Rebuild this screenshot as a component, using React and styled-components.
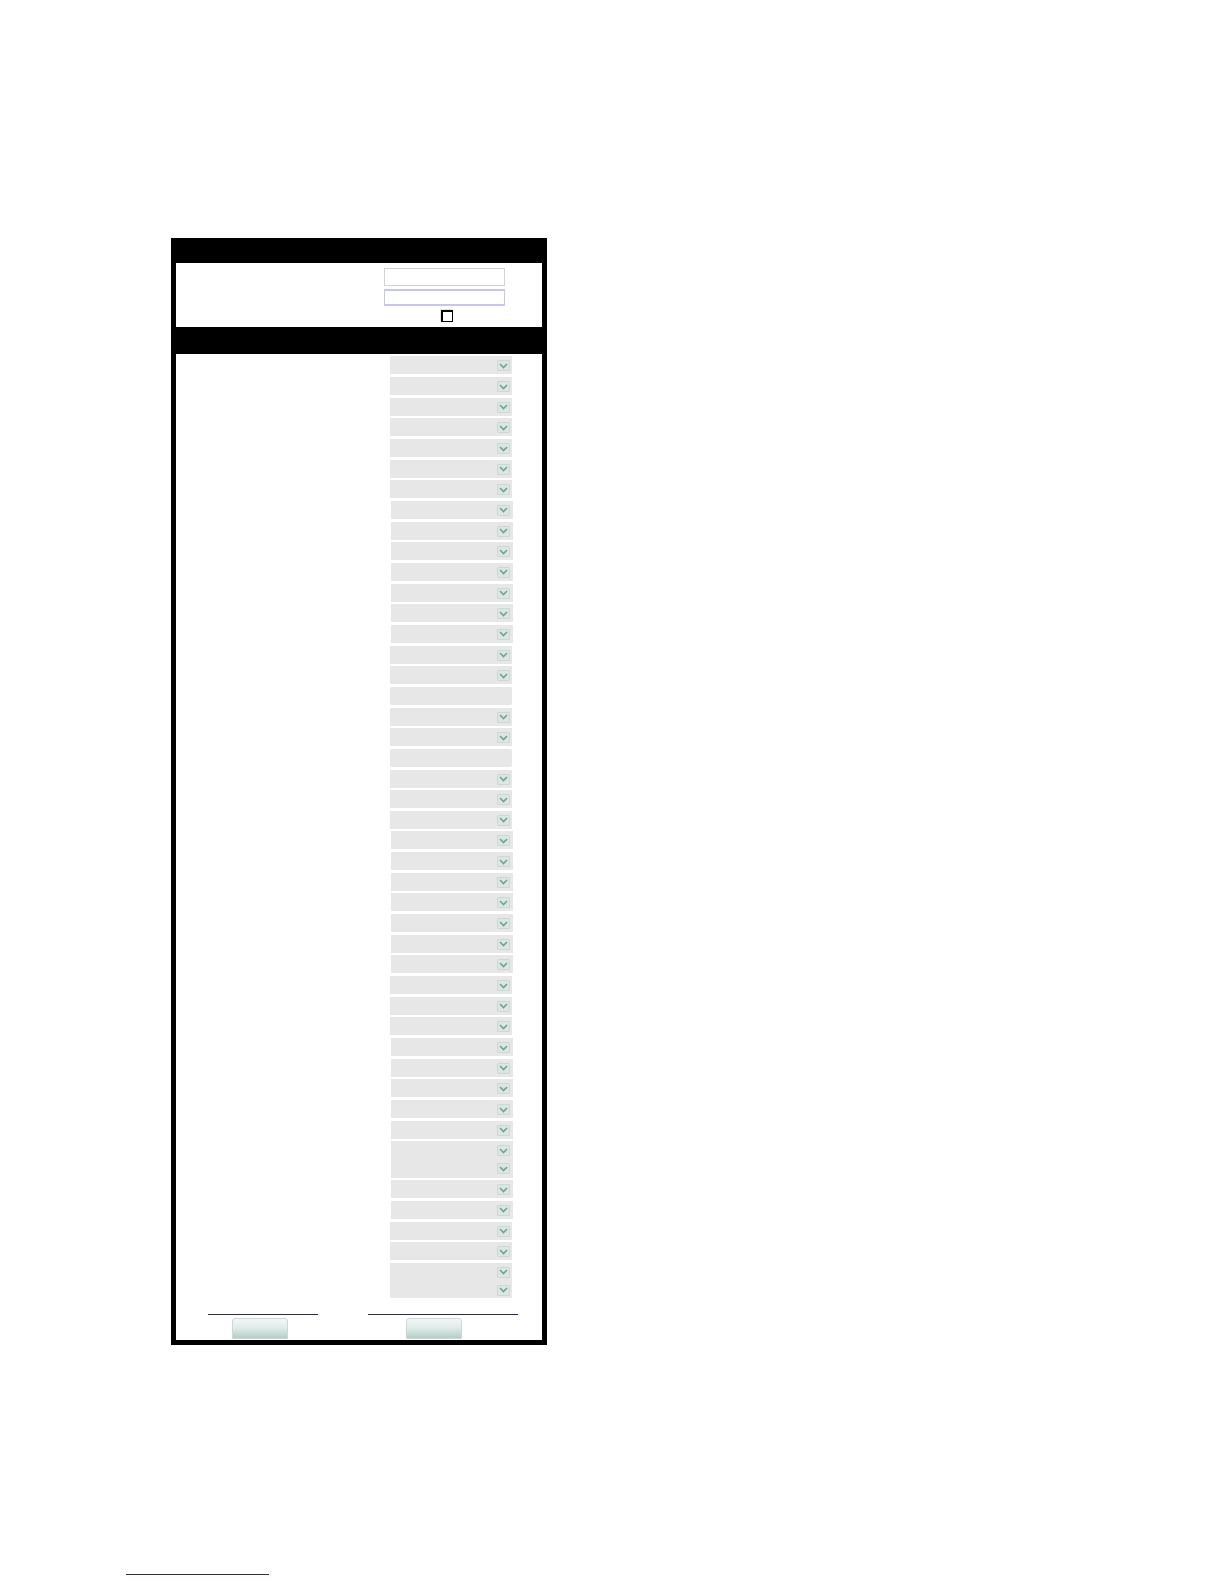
import React from 'react';
import styled, { createGlobalStyle } from 'styled-components';

const GlobalStyle = createGlobalStyle`
  html, body {
    margin: 0;
    padding: 0;
    background: #ffffff;
    font-family: "Liberation Sans", Arial, sans-serif;
  }
`;

const Page = styled.div`
  padding: 238px 0 0 171px;
  min-height: 1584px;
  box-sizing: border-box;
`;

const Frame = styled.div`
  width: 376px;
  box-sizing: border-box;
  border: 5px solid #000;
  background: #fff;
`;

const Band = styled.div`
  background: #000;
  height: ${props => props.h}px;
`;

const Section = styled.div`
  display: grid;
  grid-template-columns: 168px 198px;
`;

const LoginCell = styled.div`
  display: flex;
  flex-direction: column;
  align-items: center;
  padding: 5px 0 5px;
  gap: 3px;
`;

const TextInput = styled.div`
  width: 121px;
  height: 17.5px;
  box-sizing: border-box;
  border: 1px solid ${props => (props.focused ? '#c6c6ea' : '#d2d2d8')};
  border-top-width: ${props => (props.focused ? 2 : 1)}px;
  border-bottom-width: ${props => (props.focused ? 2 : 1)}px;
  background: #fff;
  margin-left: 3px;
`;

const Check = styled.span`
  display: block;
  width: 12px;
  height: 12px;
  box-sizing: border-box;
  border: 2px solid #000;
  border-right-width: 1.5px;
  border-bottom-width: 1.5px;
  background: #fff;
  margin: 1px 0 0 8px;
  box-shadow: -1px -1px 0 #e6e6e6;
`;

const SelectList = styled.div`
  display: flex;
  flex-direction: column;
  gap: 2.66px;
  padding: 2.4px 0 0 214px;
`;

const SelectBox = styled.div`
  width: 122px;
  height: ${props => props.h}px;
  box-sizing: border-box;
  background: #e7e7e7;
  border-radius: ${props => (props.blank ? 2 : 0)}px;
  display: flex;
  flex-direction: column;
  align-items: flex-end;
  gap: 7px;
  padding: 4px 2.5px 0 0;
  margin-left: ${props => props.shift}px;
`;

const ArrowBox = styled.span`
  display: flex;
  align-items: center;
  justify-content: center;
  width: 13px;
  height: 11px;
  box-sizing: border-box;
  background: #dde6e3;
  border: 1px solid #ccd8d4;
  border-radius: 1px;
`;

const Footer = styled.div`
  display: grid;
  grid-template-columns: 168px 198px;
  padding: 16px 0 1px;
`;

const FooterCell = styled.div`
  display: flex;
  flex-direction: column;
  align-items: center;
  gap: 2.5px;
  padding-left: ${props => props.pl}px;
`;

const Rule = styled.a`
  display: block;
  width: ${props => props.w}px;
  height: 1.5px;
  background: #2e2a5c;
`;

const Button = styled.span`
  display: block;
  width: 56px;
  height: 21px;
  box-sizing: border-box;
  border: 1px solid #c9d9d5;
  border-radius: 3px 3px 0 0;
  background: linear-gradient(#f2f6f5 0%, #e2ecea 45%, #b3cfc8 100%);
  margin-right: ${props => props.mr}px;
`;

const BottomLink = styled.a`
  display: block;
  width: 143px;
  height: 1.5px;
  background: #2e2a5c;
  margin: 229px 0 0 -45px;
`;

const Chevron = () => (
  <ArrowBox>
    <svg width="9" height="6" viewBox="0 0 9 6">
      <path d="M1 1 L4.5 4.6 L8 1" fill="none" stroke="#6aa596" strokeWidth="1.6" />
    </svg>
  </ArrowBox>
);

const rows = Array.from({ length: 44 }, (_, i) => {
  if (i === 16 || i === 19) return { kind: 'blank', h: 18 };
  if (i === 38) return { kind: 'tall', h: 36.3 };
  if (i === 43) return { kind: 'tall', h: 35 };
  return { kind: 'arrow', h: 18 };
});

const shiftFor = i => ((i >= 7 && i <= 13) || (i >= 23 && i <= 29) || (i >= 33 && i <= 40) ? 0.5 : 0);

export default function App() {
  return (
    <>
      <GlobalStyle />
      <Page>
        <Frame>
          <Band h={20} />
          <Section>
            <div />
            <LoginCell>
              <TextInput />
              <TextInput focused />
              <Check />
            </LoginCell>
          </Section>
          <Band h={27} />
          <SelectList>
            {rows.map((r, i) => (
              <SelectBox key={i} h={r.h} blank={r.kind === 'blank'} shift={shiftFor(i)}>
                {r.kind !== 'blank' && <Chevron />}
                {r.kind === 'tall' && <Chevron />}
              </SelectBox>
            ))}
          </SelectList>
          <Footer>
            <FooterCell pl={6}>
              <Rule w={110} />
              <Button mr={6} />
            </FooterCell>
            <FooterCell pl={0}>
              <Rule w={150} />
              <Button mr={18} />
            </FooterCell>
          </Footer>
        </Frame>
        <BottomLink />
      </Page>
    </>
  );
}
